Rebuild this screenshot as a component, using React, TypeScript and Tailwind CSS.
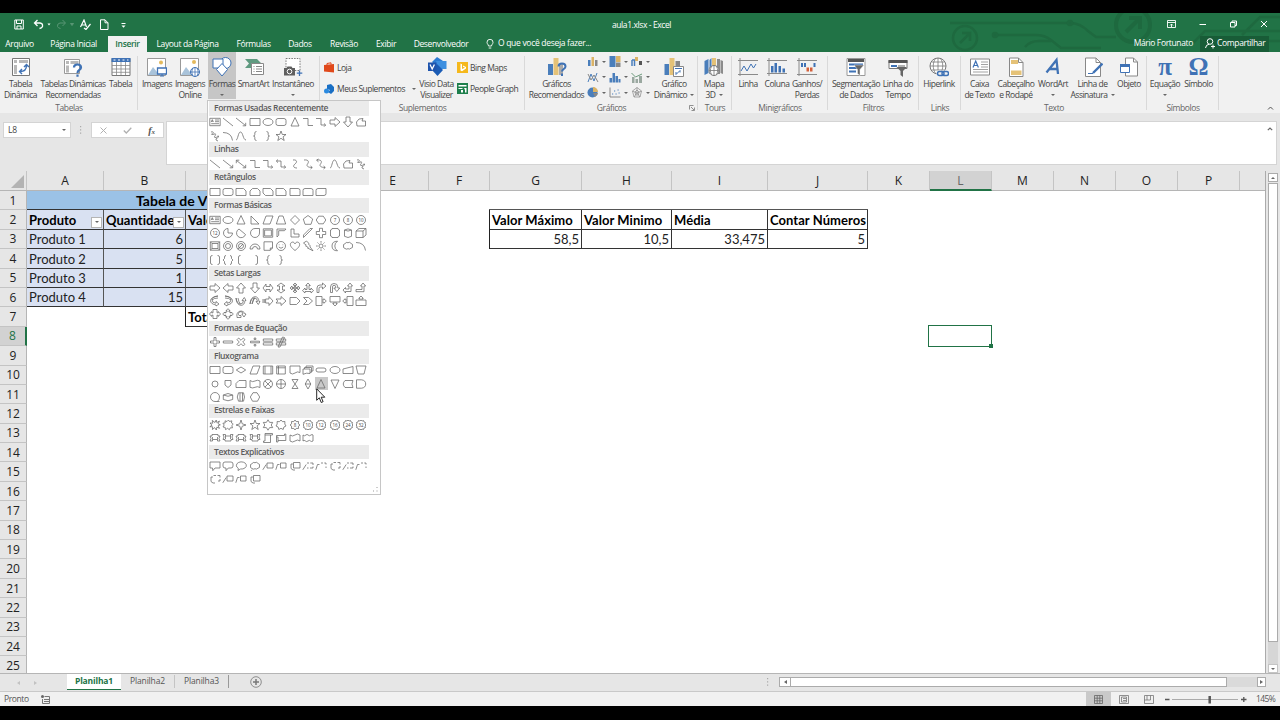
import type { ReactNode } from "react";

interface Shape {
  d: string;
  t?: string;
  active?: boolean;
}

interface ShapeSection {
  title: string;
  rows: (string | Shape)[][];
}

interface RibbonButtonProps {
  icon: ReactNode;
  lines: string[];
  width: string;
  arrow?: boolean;
  inlineArrow?: boolean;
  active?: boolean;
}

// Every shape is drawn on a 12x12 box
const line = "M1 2L11 10";
const lineArrow = "M1 2L10.5 9.5M10.7 6.8V9.8H7.7";
const lineDouble = "M1.5 2.5L10.5 9.5M10.7 6.8V9.8H7.7M1.3 5.2V2.2H4.3";
const elbow = "M1 2.5H6V9.5H11";
const elbowArrow = "M1 2.5H6V9H10.5M9 7.5L10.7 9L9 10.7";
const elbowDouble = "M1.5 3H6V9H10.5M9 7.5L10.7 9L9 10.7M3 1.5L1.3 3L3 4.7";
const curve = "M4 2C8 1.5 8.5 4 6 6C3.5 8 4.5 10 8 10";
const curveArrow = "M2 2C7 1.5 7 4 5.5 6C4 8 6 9.5 10 9.5M8.5 8L10.3 9.5L8.5 11";
const curveDouble = curveArrow + "M3.5 1L1.5 2.2L3.5 3.8";
const wave = "M1 10C3 10 3 2 5.5 2S8 10 11 10";
const freeform = "M2 10L1.5 6L4 3L8 2.5L7 5H10.5V10Z";
const scribble = "M2 2C5 1 5 4 3 4C1 4.5 6 5 6 3.5C8 5 4 7 6 7.5C9 8 8 5 9.5 6C10.5 8 6 8 7 10L9 11";
const rect = "M1 2.5H11V9.5H1Z";
const oval = "M1 6A5 3.5 0 1 0 11 6A5 3.5 0 1 0 1 6Z";
const circle = "M1.5 6A4.5 4.5 0 1 0 10.5 6A4.5 4.5 0 1 0 1.5 6Z";
const roundRect = "M3 2.5H9Q11 2.5 11 4.5V7.5Q11 9.5 9 9.5H3Q1 9.5 1 7.5V4.5Q1 2.5 3 2.5Z";
const snipOne = "M1 2.5H8.5L11 5V9.5H1Z";
const snipTwo = "M3.5 2.5H8.5L11 5V9.5H1V5Z";
const snipDiag = "M1 2.5H8.5L11 5V9.5H3.5L1 7Z";
const roundOne = "M1 2.5H9Q11 2.5 11 4.5V9.5H1Z";
const roundTwo = "M3 2.5H9Q11 2.5 11 4.5V9.5H1V4.5Q1 2.5 3 2.5Z";
const roundDiag = "M3 2.5H11V7.5Q11 9.5 9 9.5H1V4.5Q1 2.5 3 2.5Z";
const textBox = "M.8 2.3H11.2V9.7H.8ZM2.2 6L3.3 3.6L4.4 6M2.6 5.2H4M6 4H10M6 5.7H10M2.2 7.7H10";
const triangle = "M6 1.5L10 10H2Z";
const rightTriangle = "M2 2V10H10Z";
const parallelogram = "M4 2H11L8 10H1Z";
const trapezoid = "M4 2H8L10.7 10H1.3Z";
const diamond = "M6 1.5L10.5 6L6 10.5L1.5 6Z";
const pentagon = "M6 1.5L10.7 5L9 10.3H3L1.3 5Z";
const hexagon = "M3.7 2.2H8.3L10.8 6L8.3 9.8H3.7L1.2 6Z";
const arrowRight = "M1 4H6V1.5L11 6L6 10.5V8H1Z";
const arrowLeft = "M11 4H6V1.5L1 6L6 10.5V8H11Z";
const arrowUp = "M4 11V6H1.5L6 1L10.5 6H8V11Z";
const arrowDown = "M4 1V6H1.5L6 11L10.5 6H8V1Z";
const arrowH = "M1 6L4 2V4.5H8V2L11 6L8 10V7.5H4V10Z";
const arrowV = "M6 1L10 4H7.5V8H10L6 11L2 8H4.5V4H2Z";
const quadArrow = "M6 1L8 3H6.5V5.5H9V4L11 6L9 8V6.5H6.5V9H8L6 11L4 9H5.5V6.5H3V8L1 6L3 4V5.5H5.5V3H4Z";
const triArrow = "M6 1L8.3 3.5H7V7.5H9V6L11.5 8.7L9 11V9.5H3V11L.5 8.7L3 6V7.5H5V3.5H3.7Z";
const bentArrow = "M2 10.5V6Q2 3 5 3H7.5V1L11 4L7.5 7V5H5.5Q4 5 4 6.5V10.5Z";
const uTurn = "M1.5 10.5V5Q1.5 1.5 5 1.5Q8.8 1.5 8.8 5V6H10.8L7.8 9.5L4.8 6H6.8V5Q6.8 3.3 5 3.3Q3.5 3.3 3.5 5V10.5Z";
const leftUp = "M1 8L3.5 5.5V7H7V4H5.5L8 1L10.5 4H9V9.5H3.5V11Z";
const bentUp = "M1 7.5H7V4H5.5L8 1L10.7 4H9V9.7H1Z";
const curvedRight = "M9 1Q3 1.5 3 5Q3 8 7 8.2V6.5L10 9L7 11V10Q1.5 9 1.5 5.5Q2 2 9 1ZM3 5Q5 3 9 3";
const curvedLeft = "M3 1Q9 1.5 9 5Q9 8 5 8.2V6.5L2 9L5 11V10Q10.5 9 10.5 5.5Q10 2 3 1ZM9 5Q7 3 3 3";
const curvedUp = "M1 3Q2 9 5.5 9Q8.3 9 8.5 5.5H7L9.3 2.5L11 5.5H10Q9.5 10.3 6 10.3Q1.5 10 1 3ZM5.5 9Q3.5 7 3 3";
const curvedDown = "M1 9Q2 3 5.5 3Q8.3 3 8.5 6.5H7L9.3 9.5L11 6.5H10Q9.5 1.7 6 1.7Q1.5 2 1 9ZM5.5 3Q3.5 5 3 9Z";
const stripedArrow = "M1 4V8M2.3 4V8M3.6 4H7V1.5L11 6L7 10.5V8H3.6Z";
const notchedArrow = "M1 4H6V1.5L11 6L6 10.5V8H1L2.8 6Z";
const homePlate = "M1 2.5H7.5L11 6L7.5 9.5H1Z";
const chevron = "M1.5 2.5H6.5L10.5 6L6.5 9.5H1.5L5 6Z";
const calloutRight = "M1 1.5H7V10.5H1ZM7 5H8.8V3.7L11.3 6L8.8 8.3V7H7";
const calloutDown = "M1 1.5H11V7H1ZM5 7V8.6H3.7L6 11L8.3 8.6H7V7";
const calloutLeft = "M5 1.5H11V10.5H5ZM5 5H3.2V3.7L.7 6L3.2 8.3V7H5";
const calloutUp = "M1 5H11V10.5H1ZM5 5V3.4H3.7L6 1L8.3 3.4H7V5";
const calloutH = "M4 1.5H8V4.8H9.3V3.5L11.5 6L9.3 8.5V7.2H8V10.5H4V7.2H2.7V8.5L.5 6L2.7 3.5V4.8H4Z";
const calloutQuad = "M6 .7L8 2.7H7V4H8.5V5H9.3V4L11.3 6L9.3 8V7H8.5V8.3H7V9.3H8L6 11.3L4 9.3H5V8.3H3.5V7H2.7V8L.7 6L2.7 4V5H3.5V4H5V2.7H4Z";
const star4 = "M6 1L7.2 4.8L11 6L7.2 7.2L6 11L4.8 7.2L1 6L4.8 4.8Z";
const star5 = "M6 1L7.3 4.5H11L8.1 6.8L9.2 10.5L6 8.3L2.8 10.5L3.9 6.8L1 4.5H4.7Z";
const star6 = "M6 .8L7.6 3.4H10.7L9.2 6L10.7 8.6H7.6L6 11.2L4.4 8.6H1.3L2.8 6L1.3 3.4H4.4Z";
const star7 = "M6 1L7.5 2.7L9.9 2.5L9.8 5L11 7L8.9 8L8.2 10.5L6 9.3L3.8 10.5L3.1 8L1 7L2.2 5L2.1 2.5L4.5 2.7Z";
const star8 = "M6 1L7.2 2.6L9.5 2.5L9.4 4.8L11 6L9.4 7.2L9.5 9.5L7.2 9.4L6 11L4.8 9.4L2.5 9.5L2.6 7.2L1 6L2.6 4.8L2.5 2.5L4.8 2.6Z";
const burst = "M6 3.5L7.2 1L7.8 3.6L10.5 2L9 4.8L11.3 5.8L9 6.8L10.5 9.3L7.8 8.2L7.3 11L5.7 8.6L3.4 10.5L3.7 7.8L.8 7.7L3 6.2L1 4L3.8 4.2L3.2 1.4Z";
const burstRound = "M5 2.5L6.5 1L7.5 2.5L9.8 1.8L9.5 4L11.2 5.2L9.8 6.5L10.5 8.8L8.3 8.8L7.3 10.8L5.7 9.3L3.5 10.6L3.2 8.4L1 8L2.2 6L.9 4.2L3.2 4L3 1.8Z";
const gear = "M6 1L7 2L8.5 1.5L9 3L10.5 3.5L10 5L11 6L10 7L10.5 8.5L9 9L8.5 10.5L7 10L6 11L5 10L3.5 10.5L3 9L1.5 8.5L2 7L1 6L2 5L1.5 3.5L3 3L3.5 1.5L5 2Z";
const plus = "M4.5 1.3H7.5V4.5H10.7V7.5H7.5V10.7H4.5V7.5H1.3V4.5H4.5Z";
const mathPlus = "M5 1.5H7V5H10.5V7H7V10.5H5V7H1.5V5H5Z";
const minus = "M1.3 5H10.7V7H1.3Z";
const times = "M2 3.7L3.7 2L6 4.3L8.3 2L10 3.7L7.7 6L10 8.3L8.3 10L6 7.7L3.7 10L2 8.3L4.3 6Z";
const divide = "M1.5 5.2H10.5V6.8H1.5ZM5.2 2H6.8V3.5H5.2ZM5.2 8.5H6.8V10H5.2Z";
const equal = "M1.3 3H10.7V5.2H1.3ZM1.3 6.8H10.7V9H1.3Z";
const notEqual = equal + "M3 11L7.5 1L9.5 1.5L5 11Z";
const ribbonUp = "M1 4H3V2.5H9V4H11L10 6.5L11 9H8.5V7.5H3.5V9H1L2 6.5ZM3.5 7.5V5M8.5 7.5V5";
const ribbonDown = "M1 2.5H3.5V4H8.5V2.5H11L10 5L11 7.5H9V9H3V7.5H1L2 5ZM3.5 4V7M8.5 4V7";
const scrollV = "M3 1.5H10.5V3H8.5V10.5H1.5V9H3ZM3 3H8.5";
const scrollH = "M1.5 3.5H9.5V2H10.8V8.5H3V10H1.5ZM3 8.5V5H1.5";
const waveBox = "M1 3Q3.5 5 6 3T11 3V9Q8.5 7 6 9T1 9Z";
const doubleWave = "M1 3Q2.5 4.5 4 3Q5 1.7 6 3Q7.5 4.5 9 3Q10 2 11 3V9Q9.5 10 8.5 9Q7.5 7.7 6 9Q4.5 10.2 3.5 9Q2 7.7 1 9Z";
const calloutRect = "M1 2H11V8H6L3.8 10.7L3.5 8H1Z";
const calloutRound = "M3 2H9Q11 2 11 4V6Q11 8 9 8H6.3L4 10.7V8H3Q1 8 1 6V4Q1 2 3 2Z";
const calloutOval = "M3 10.5L3.3 8.3A5 3.6 0 1 1 5.5 9Z";
const cloud = "M3 8.5Q1 8 1.5 6Q1 4 3 3.7Q4 1.8 6 2.7Q8 1.5 9 3.5Q11.3 4 10.5 6Q11 8 9 8.2Q7.5 9.7 6 8.7Q4.5 9.7 3 8.5Z";
const cloudCallout = cloud + "M3 9.7L2.2 10.8";
const note1 = "M5 3H11V8H5ZM.8 9.8L4.2 4.5";
const note2 = "M5.5 3H11V8H5.5ZM.8 9.8L2.5 4.5H4.5";
const note3 = "M4.5 2.5H11V8H4.5ZM4 4H2V8.5L4 10H6";
const noteOpen1 = "M5 3H7M8.3 3H11V5M11 6.5V8H8M6.5 8H5M.8 9.8L4.2 4.5";
const noteOpen2 = "M6 3H8M9.3 3H11V4.5M11 6.5V8M.8 9.8L2.5 4.5H4.5";
const noteOpen3 = "M4.5 2.5H7M8.5 2.5H11V4.5M11 6V8H9M4 4H2V8.5L4 10H6";
const can = "M2.5 3V9.3Q6 11.7 9.5 9.3V3Q6 .8 2.5 3Q6 5.2 9.5 3";
const cube = "M1 4L4 1.5H11V8L8 10.5H1ZM1 4H8V10.5M8 4L11 1.5";
const bevel = "M1.3 1.8H10.7V10.2H1.3ZM3 3.5H9V8.5H3ZM1.3 1.8L3 3.5M10.7 1.8L9 3.5M10.7 10.2L9 8.5M1.3 10.2L3 8.5";
const frame = "M1.3 1.8H10.7V10.2H1.3ZM2.6 3.1H9.4V8.9H2.6Z";
const bracketL = "M5.5 1.5Q3.5 1.5 3.5 3V9Q3.5 10.5 5.5 10.5";
const bracketR = "M6.5 1.5Q8.5 1.5 8.5 3V9Q8.5 10.5 6.5 10.5";
const braceL = "M7.5 1.5Q5.8 1.5 5.8 3V4.7Q5.8 6 4.5 6Q5.8 6 5.8 7.3V9Q5.8 10.5 7.5 10.5";
const braceR = "M4.5 1.5Q6.2 1.5 6.2 3V4.7Q6.2 6 7.5 6Q6.2 6 6.2 7.3V9Q6.2 10.5 4.5 10.5";
const bracketPair = "M3.5 1.5Q1.5 1.5 1.5 3V9Q1.5 10.5 3.5 10.5M8.5 1.5Q10.5 1.5 10.5 3V9Q10.5 10.5 8.5 10.5";
const bracePair = "M4 1.5Q2.5 1.5 2.5 3V4.5L1 6L2.5 7.5V9Q2.5 10.5 4 10.5M8 1.5Q9.5 1.5 9.5 3V4.5L11 6L9.5 7.5V9Q9.5 10.5 8 10.5";
const arc = "M1 2.5Q9.5 2.5 10.5 10.5";

const sections: ShapeSection[] = [
  {
    title: "Formas Usadas Recentemente",
    rows: [
      [textBox, line, lineArrow, rect, oval, roundRect, triangle, elbow, elbowArrow, arrowRight, arrowDown, freeform],
      [scribble, arc, wave, braceL, braceR, star5],
    ],
  },
  {
    title: "Linhas",
    rows: [
      [line, lineArrow, lineDouble, elbow, elbowArrow, elbowDouble, curve, curveArrow, curveDouble, wave, freeform, scribble],
    ],
  },
  {
    title: "Retângulos",
    rows: [[rect, roundRect, snipOne, snipTwo, snipDiag, snipOne, roundOne, roundTwo, roundDiag]],
  },
  {
    title: "Formas Básicas",
    rows: [
      [
        textBox, oval, triangle, rightTriangle, parallelogram, trapezoid, diamond, pentagon, hexagon,
        { d: circle, t: "7" }, { d: circle, t: "8" }, { d: circle, t: "10" },
      ],
      [
        { d: circle, t: "12" },
        "M6 1.5A4.5 4.5 0 1 0 10.5 6H6Z",
        "M4 2A4.6 4.6 0 1 0 10.5 7.5Z",
        "M6 1.5H10.5V6A4.5 4.5 0 1 1 6 1.5Z",
        frame,
        "M2 10V2H11L9.5 3.7H3.7V8.3Z",
        "M2 2H5V7H10V10H2Z",
        "M1.5 8L8 1.5H10.5L1.5 10.5Z",
        plus,
        "M3 1.5H9Q9 3 10.5 3V9Q9 9 9 10.5H3Q3 9 1.5 9V3Q3 3 3 1.5Z",
        can,
        cube,
      ],
      [
        bevel,
        circle + "M3.5 6A2.5 2.5 0 1 0 8.5 6A2.5 2.5 0 1 0 3.5 6Z",
        circle + "M3.5 6A2.5 2.5 0 1 0 8.5 6A2.5 2.5 0 1 0 3.5 6ZM4 8L8 4M2.8 9.2L4.3 7.7",
        "M1 9A5 5 0 0 1 11 9H8.5A2.5 2.5 0 0 0 3.5 9Z",
        "M2 1.8H10.5V8L8.3 10.3H2ZM8.3 10.3V8H10.5",
        circle + "M3.8 7Q6 9.5 8.2 7M4.2 4.5V5.2M7.8 4.5V5.2",
        "M6 10.5C2 7.5 1 5.5 1.5 3.7C2.2 1.5 5.2 1.5 6 4C6.8 1.5 9.8 1.5 10.5 3.7C11 5.5 10 7.5 6 10.5Z",
        "M4.5 1L7 3.5L6.3 4L8.5 6L7.8 6.5L11 10.8L5.5 8L6.3 7.5L3.5 5.8L4.3 5.2L1.5 3Z",
        "M4 6A2 2 0 1 0 8 6A2 2 0 1 0 4 6ZM6 1V2.7M6 9.3V11M1 6H2.7M9.3 6H11M2.5 2.5L3.6 3.6M8.4 8.4L9.5 9.5M2.5 9.5L3.6 8.4M8.4 3.6L9.5 2.5",
        "M8.5 1.2Q3 1.2 3 6T8.5 10.8Q5.8 9 5.8 6T8.5 1.2Z",
        cloud,
        arc,
      ],
      [bracketPair, bracePair, bracketL, bracketR, braceL, braceR],
    ],
  },
  {
    title: "Setas Largas",
    rows: [
      [arrowRight, arrowLeft, arrowUp, arrowDown, arrowH, arrowV, quadArrow, triArrow, bentArrow, uTurn, leftUp, bentUp],
      [curvedRight, curvedLeft, curvedUp, curvedDown, stripedArrow, notchedArrow, homePlate, chevron, calloutRight, calloutDown, calloutLeft, calloutUp],
      [calloutH, calloutQuad, "M2 8.5A4 4 0 1 1 10 6H11L9 9L6.8 6H8A2.3 2.3 0 1 0 4 7.5H6V9.5H2Z"],
    ],
  },
  {
    title: "Formas de Equação",
    rows: [[mathPlus, minus, times, divide, equal, notEqual]],
  },
  {
    title: "Fluxograma",
    rows: [
      [
        rect,
        roundRect,
        "M6 3L10.7 6L6 9L1.3 6Z",
        parallelogram,
        "M1.3 2H10.7V10H1.3ZM3 2V10M9 2V10",
        "M1.7 2H10.3V10H1.7ZM3.5 2V10M1.7 3.8H10.3",
        "M1 2H11V8.5Q8.5 7 6 9T1 9Z",
        "M1 5H8V9.5Q4.5 8.5 1 10.3ZM2.5 5V3.5H9.5V8.3H8M4 3.5V2H11V7H9.5",
        "M3 4H9Q11 4 11 6T9 8H3Q1 8 1 6T3 4Z",
        oval,
        "M1 5L11 2.5V9.5H1Z",
        "M1 2H11L9 10H3Z",
      ],
      [
        "M3 6A3 3 0 1 0 9 6A3 3 0 1 0 3 6Z",
        "M3 2.5H9V7L6 9.5L3 7Z",
        "M4 2.5H11V9.5H1V5.5Z",
        "M1 2.5Q3.5 4.5 6 3T11 3V9.5Q8.5 8 6 9.3T1 9.3Z",
        circle + "M2.8 2.8L9.2 9.2M9.2 2.8L2.8 9.2",
        circle + "M6 1.5V10.5M1.5 6H10.5",
        "M3 1.5H9L3 10.5H9Z",
        "M6 1L8.8 6L6 11L3.2 6ZM3.2 6H8.8",
        { d: triangle, active: true },
        "M2 2H10L6 10.5Z",
        "M3 2.5H11Q8.8 6 11 9.5H3Q-.5 6 3 2.5Z",
        "M1.5 1.8H6.5Q10.7 2.3 10.7 6T6.5 10.2H1.5Z",
      ],
      [
        "M10.5 10.5H6A4.5 4.5 0 1 1 10.5 6Q10.5 8.5 8.5 10.5",
        "M1.3 4V8.5Q6 11 10.7 8.5V4Q6 1 1.3 4Q6 6.5 10.7 4",
        "M3.5 1.8H8.5Q10.5 6 8.5 10.2H3.5Q1 6 3.5 1.8ZM5 1.8V10.2M7.5 1.8V10.2",
        "M4 1.7H8L10.7 6L8.5 10.2H3.5L1.3 6Z",
      ],
    ],
  },
  {
    title: "Estrelas e Faixas",
    rows: [
      [
        burst, burstRound, star4, star5, star6, star7,
        { d: star8, t: "8" }, { d: gear, t: "10" }, { d: gear, t: "12" }, { d: gear, t: "16" }, { d: gear, t: "24" }, { d: gear, t: "32" },
      ],
      [ribbonUp, ribbonDown, ribbonUp, ribbonDown, scrollV, scrollH, waveBox, doubleWave],
    ],
  },
  {
    title: "Textos Explicativos",
    rows: [
      [calloutRect, calloutRound, calloutOval, cloudCallout, note1, note2, note3, noteOpen1, noteOpen2, noteOpen3, noteOpen1, noteOpen2],
      [noteOpen3, note1, note2, note3],
    ],
  },
];

const BLUE = "#3f72b5";
const GRAY = "#777";

function Icon({ children }: { children: ReactNode }) {
  return (
    <svg className="h-5 w-5 shrink-0" viewBox="0 0 20 20" fill="none">
      {children}
    </svg>
  );
}

const icons = {
  pivot: (
    <Icon>
      <path d="M1.5 1.5h17v17h-17z" fill="#fff" stroke={GRAY} />
      <path d="M3 3h3v3H3zM8 3h9v3H8zM3 8h3v9H3z" fill="#b9b9b9" />
      <path d="M9 14.5c4 0 6.5-1.5 6.5-6M13 10l2.5-2.5L18 10M11 12l-2.5 2.5L11 17" stroke={BLUE} strokeWidth="1.4" />
    </Icon>
  ),
  pivotHelp: (
    <Icon>
      <path d="M1.500 2.500h15v14h-15z" fill="#fff" stroke="#999" />
      <path d="M3 4h3v3H3zM7.500 4h8v3h-8zM3 8.500h3v7H3z" fill="#b9b9b9" />
      <path d="M11 10.500c0-4 7-4 7 0 0 2.500-3.500 2.500-3.500 5.500M14.500 17.500v2.300" stroke={BLUE} strokeWidth="2.200" />
    </Icon>
  ),
  table: (
    <Icon>
      <path d="M1 1.500h18v17H1z" fill="#fff" stroke={GRAY} />
      <path d="M.5 1h19v4H.5z" fill={BLUE} />
      <path d="M2.500 3h2M7 3h2M11.500 3h2M16 3h1.500" stroke="#fff" />
      <path d="M5.500 5v13M10 5v13M14.500 5v13M1 8.500h18M1 12h18M1 15.300h18" stroke="#888" strokeWidth=".8" />
    </Icon>
  ),
  picture: (
    <Icon>
      <path d="M.5 1.500h18v17H.5z" fill="#fff" stroke="#999" />
      <path d="M1 18l5-8 4 5 3-3v6z" fill="#a9c3da" />
      <circle cx="14" cy="5.500" r="2" fill="#e3b95c" />
      <path d="M10.500 11h9v6h-9z" fill="#fff" stroke={BLUE} strokeWidth="1.300" />
      <path d="M13 19h4M15 17v2" stroke={BLUE} />
    </Icon>
  ),
  pictureWeb: (
    <Icon>
      <path d="M.5 1.500h18v17H.5z" fill="#fff" stroke="#999" />
      <path d="M1 18l5-8 4 5 3-3v6z" fill="#a9c3da" />
      <circle cx="14" cy="5" r="2" fill="#e3b95c" />
      <circle cx="15" cy="15" r="4.500" fill="#fff" stroke={BLUE} />
      <path d="M10.500 15h9M15 10.500v9M13 11c-1.500 3-1.500 5 0 8M17 11c1.500 3 1.500 5 0 8" stroke={BLUE} strokeWidth=".8" />
    </Icon>
  ),
  shapes: (
    <Icon>
      <circle cx="13.500" cy="6" r="5.500" fill="#fff" stroke={BLUE} />
      <path d="M1 2h10v9H1z" fill="#fff" stroke={BLUE} />
      <path d="M10 6.500l5.500 6L10 19l-5.500-6.500z" fill="#fff" stroke={BLUE} />
    </Icon>
  ),
  smartArt: (
    <Icon>
      <path d="M1 2h12l5 5-3 4H1l4-4.500z" fill="#5f9a80" />
      <path d="M7.500 6.500h12v11h-12z" fill="#fff" stroke="#888" />
      <path d="M9.500 9.500h1M12 9.500h6M9.500 12h1M12 12h6M9.500 14.500h1M12 14.500h6" stroke="#888" />
    </Icon>
  ),
  screenshot: (
    <Icon>
      <path d="M3 1.500h14v12H3z" fill="#fff" stroke="#777" strokeDasharray="1.500 1.200" />
      <path d="M1 11h2.500l1-1.500h4l1 1.500H12v7.500H1z" fill="#5f5f5f" />
      <circle cx="6.500" cy="14.500" r="2.300" fill="#5f5f5f" stroke="#fff" />
      <path d="M16.500 13.500v5.500M13.800 16.200h5.500" stroke={BLUE} strokeWidth="1.300" />
    </Icon>
  ),
  visio: (
    <Icon>
      <path d="M10 0l6 4-6 6-5-5z" fill="#2b7cd3" />
      <path d="M9 4h10.500v8H11z" fill="#3d8fe0" />
      <path d="M10 7l6 6-5.500 6L5 13z" fill="#1b5cb5" />
      <path d="M1 5.500h8.500V14H1z" fill="#1e54ad" />
      <path d="M3 7.500l2.200 4.500 2.200-4.500" stroke="#fff" strokeWidth="1.300" />
    </Icon>
  ),
  chartHelp: (
    <Icon>
      <path d="M1 7h5v11H1z" fill="#4a7ebb" />
      <path d="M6.500 1h5v17h-5z" fill="#e5c277" />
      <path d="M12 7h4v11h-4z" fill="#aaa" />
      <path d="M11.500 9.500c0-4 7-4 7 0 0 2.500-3.500 2.500-3.500 5M15 16.500v2.500" stroke={BLUE} strokeWidth="2" />
    </Icon>
  ),
  pivotChart: (
    <Icon>
      <path d="M.5 7h4.500v11H.5z" fill="#4a7ebb" />
      <path d="M5.500 1h5v17h-5z" fill="#e5c277" />
      <path d="M11.500 4h4.500v8h-4.500z" fill="#888" />
      <path d="M9.500 9.500h10v10h-10z" fill="#fff" stroke="#888" />
      <path d="M11 11.500h7M12 17.500l4-4M16 13.500v2M12 17.500v-2.500" stroke={BLUE} />
    </Icon>
  ),
  map3d: (
    <Icon>
      <path d="M.5 4l4-2v14l-4 2z" fill="#4a7ebb" />
      <path d="M5.500 3l2-2v16h-2z" fill="#4a7ebb" />
      <path d="M8 1h4v10H8z" fill="#e5c277" />
      <path d="M13 2h3v15h-3zM16.500 3l2.500 1v13l-2.500-1z" fill="#8b8b8b" />
      <circle cx="10" cy="13.500" r="5" fill="#fff" stroke="#777" />
      <path d="M5 13.500h10M10 8.500v10M7.500 9.500c-1.500 3-1.500 5 0 8M12.500 9.500c1.500 3 1.500 5 0 8" stroke="#777" strokeWidth=".8" />
    </Icon>
  ),
  sparkLine: (
    <Icon>
      <path d="M0 3.500h20M0 17.500h20M2 1v18" stroke="#8a8a8a" />
      <path d="M3 14l3-5 3 5 4-7 2.500 4L18 7" stroke={BLUE} />
    </Icon>
  ),
  sparkColumn: (
    <Icon>
      <path d="M0 3.500h20M0 16.500h20M2 1v18" stroke="#8a8a8a" />
      <path d="M4 9h2.500v6.500H4zM7.500 6H10v9.500H7.500zM11.500 9H14v6.500h-2.500zM15.500 11.500H18v4h-2.500z" fill={BLUE} />
    </Icon>
  ),
  sparkWin: (
    <Icon>
      <path d="M0 3.500h20M0 17.500h20M2 1v18" stroke="#8a8a8a" />
      <path d="M4 6h2v4H4zM7 6h2v4H7zM16.500 6h2v4h-2z" fill={BLUE} />
      <path d="M9.500 10.500H12v4H9.500zM13 10.500h2.500v4H13z" fill="#d4603a" />
    </Icon>
  ),
  slicer: (
    <Icon>
      <path d="M1 1.500h18v17H1z" fill="#fff" stroke="#999" />
      <path d="M2 2h16v3H2z" fill="#555" />
      <path d="M3 7.500h14M3 11h9M3 14.500h7" stroke={BLUE} strokeWidth="1.800" />
      <path d="M8 8h10l-4 4.500v6l-2.500-2v-4z" fill="#666" stroke="#eee" strokeWidth=".5" />
    </Icon>
  ),
  timeline: (
    <Icon>
      <path d="M1 3.500h18v8H1z" fill="#fff" stroke="#777" />
      <path d="M.5 3h19v3H.5z" fill="#555" />
      <path d="M3 9h6" stroke={BLUE} strokeWidth="2" />
      <path d="M10 9h7" stroke="#999" strokeWidth="1.500" />
      <path d="M8.500 10H19l-4 4v6l-2.500-2v-4z" fill="#666" />
    </Icon>
  ),
  link: (
    <Icon>
      <circle cx="9" cy="9" r="8" fill="#fff" stroke="#777" />
      <path d="M1 9h16M9 1v16M2.500 5h13M2.500 13h13M6.500 1.500c-3 4.500-3 10 0 15M11.500 1.500c3 4.500 3 10 0 15" stroke="#777" strokeWidth=".8" />
      <path d="M7.500 13.500h12.500v6H7.500z" fill="#f1f1f1" />
      <rect x="8.500" y="14.500" width="6.500" height="4" rx="2" stroke={BLUE} strokeWidth="1.500" />
      <rect x="13" y="14.500" width="6.500" height="4" rx="2" stroke={BLUE} strokeWidth="1.500" />
    </Icon>
  ),
  textBox: (
    <Icon>
      <path d="M.5 2h19v16H.5z" fill="#fff" stroke="#888" />
      <path d="M3 10.500L5.700 4l2.700 6.500M4 8.500h3.500" stroke={BLUE} strokeWidth="1.200" />
      <path d="M11 5h7M11 7.500h7M11 10h7M3 12.500h15M3 15h15" stroke="#999" strokeWidth=".9" />
    </Icon>
  ),
  headerFooter: (
    <Icon>
      <path d="M3.500 1h9l4.500 4.500v14H3.500z" fill="#fff" stroke="#888" />
      <path d="M5 3h7v4H5zM5 13.500h10.500V18H5z" fill="#e5c277" />
      <path d="M12.500 1v4.500H17" stroke="#888" />
    </Icon>
  ),
  wordArt: (
    <Icon>
      <path d="M3.500 15.500L13.500 3l1.500 14M6.500 12h8" stroke={BLUE} strokeWidth="2.300" />
    </Icon>
  ),
  signature: (
    <Icon>
      <path d="M2.500 1H13l4.500 4.500v14h-15z" fill="#fff" stroke="#888" />
      <path d="M13 1v4.500h4.500" stroke="#888" />
      <path d="M5 16.500h5" stroke={BLUE} />
      <path d="M10 16L19.500 6.500" stroke={BLUE} strokeWidth="2.400" />
    </Icon>
  ),
  object: (
    <Icon>
      <path d="M6.500 1h8l4 4v14h-12z" fill="#fff" stroke="#888" />
      <path d="M14.500 1v4h4" stroke="#888" />
      <path d="M1.500 7.500h9v8h-9z" fill="#fff" stroke={BLUE} />
      <path d="M1 7h10v3H1z" fill={BLUE} />
    </Icon>
  ),
};

function Glyph({ children }: { children: ReactNode }) {
  return (
    <span className="flex h-5 items-center justify-center font-['Liberation_Serif'] text-[25px] font-bold leading-5 tracking-normal text-[#3f72b5]">
      {children}
    </span>
  );
}

function Caret() {
  return <span className="inline-block h-0 w-0 border-x-2 border-t-2 border-x-transparent border-t-[#666]" />;
}

function RibbonButton({ icon, lines, width, arrow, inlineArrow, active }: RibbonButtonProps) {
  return (
    <div
      className={`${width} flex h-[47px] shrink-0 flex-col items-center pt-[5px] ${active ? "bg-[#c6c6c6]" : ""}`}
    >
      {icon}
      <div className="mt-[2px] text-center leading-[10.5px] whitespace-nowrap">
        {lines.map((text, i) => (
          <div key={text} className="flex items-center justify-center">
            {text}
            {inlineArrow && i === lines.length - 1 && (
              <span className="ml-[3px] flex">
                <Caret />
              </span>
            )}
          </div>
        ))}
      </div>
      {arrow && (
        <span className="mt-[4px] flex">
          <Caret />
        </span>
      )}
    </div>
  );
}

function Group({ label, width, children, launcher }: { label?: string; width: string; children: ReactNode; launcher?: boolean }) {
  return (
    <div className={`${width} relative flex shrink-0 flex-col justify-between`}>
      <div className="flex">{children}</div>
      {label && <div className="text-center text-[8.5px] leading-[10px] tracking-[-0.4px] text-[#666]">{label}</div>}
      <span className="absolute top-[4px] right-0 h-[54px] w-px bg-[#d9d9d9]" />
      {launcher && (
        <svg className="absolute right-[3px] bottom-[2px] h-[6px] w-[6px]" viewBox="0 0 6 6" fill="none" stroke="#777" strokeWidth=".8">
          <path d="M.5 4.500v-4h4M2 2l3 3M5.500 2.500v3h-3" />
        </svg>
      )}
    </div>
  );
}

function MiniChart({ kind }: { kind: string }) {
  return (
    <div className="flex h-[15.5px] w-[22px] items-center gap-[3px]">
      <svg className="h-[11px] w-[12px]" viewBox="0 0 12 11" fill="none">
        {kind === "column" && (
          <>
            <path d="M1 4h2.500v6H1z" fill="#4a7ebb" />
            <path d="M4.500 1H7v9H4.500z" fill="#dbb366" />
            <path d="M8 4h2.500v6H8z" fill="#888" />
          </>
        )}
        {kind === "tree" && (
          <>
            <path d="M.5 0h6v11h-6z" fill="#4a7ebb" />
            <path d="M7 0h4.500v6H7z" fill="#dbb366" />
            <path d="M7 6.500h4.500V11H7z" fill="#888" />
          </>
        )}
        {kind === "waterfall" && (
          <>
            <path d="M1 4h2.500v6M1 10V4" stroke="#4a7ebb" strokeWidth="1.500" />
            <path d="M4 1h3v4H4z" fill="#dbb366" />
            <path d="M8 5h3v4H8z" fill="#555" />
          </>
        )}
        {kind === "line" && (
          <>
            <path d="M1 10l3-8 3 7 3-8" stroke="#4a7ebb" />
            <path d="M1 2l3 6 3-5 4 7" stroke="#888" />
          </>
        )}
        {kind === "hist" && <path d="M.5 6H3v4.500H.5zM3.500 1H6v9.500H3.500zM6.500 4H9v6.500H6.500zM9.500 7h2v3.500h-2z" fill="#4a7ebb" />}
        {kind === "combo" && (
          <>
            <path d="M1 5h2.500v6H1zM4.500 7H7v4H4.500zM8 4h3v7H8z" fill="#9aa8a0" />
            <path d="M.5 1l4 4 6.500-3" stroke="#6c9a7c" />
          </>
        )}
        {kind === "pie" && (
          <>
            <circle cx="5.500" cy="5.500" r="5" fill="#4a7ebb" />
            <path d="M6 5V0a5 5 0 0 1 5 5z" fill="#dbb366" />
            <path d="M6 6h5a5 5 0 0 1-3 4z" fill="#888" />
          </>
        )}
        {kind === "scatter" && (
          <>
            <path d="M1 .5V10h10.500" stroke="#888" />
            <path d="M3 7h1.200M5 4h1.200M6.500 7h1.200M8.500 3h1.200M9.500 6h1.200" stroke="#4a7ebb" strokeWidth="1.200" />
          </>
        )}
        {kind === "radar" && (
          <path d="M6 .5l4.500 3.500L9 10H3L1.500 4zM6 3l2 2-.7 3H4.700L4 5zM6 .5V6M1.500 4L6 6l4.500-2M3 10l3-4 3 4" stroke="#888" strokeWidth=".7" />
        )}
      </svg>
      <Caret />
    </div>
  );
}

function Ribbon() {
  return (
    <div className="flex h-[61px] bg-[#f1f1f1] text-[8.5px] tracking-[-0.5px] text-[#444]">
      <Group label="Tabelas" width="w-[138px]">
        <RibbonButton icon={icons.pivot} lines={["Tabela", "Dinâmica"]} width="ml-[3px] w-[35px]" />
        <RibbonButton icon={icons.pivotHelp} lines={["Tabelas Dinâmicas", "Recomendadas"]} width="w-[70px]" />
        <RibbonButton icon={icons.table} lines={["Tabela"]} width="w-[25px]" />
      </Group>
      <Group width="w-[182px]">
        <RibbonButton icon={icons.picture} lines={["Imagens"]} width="ml-[3px] w-[32px]" />
        <RibbonButton icon={icons.pictureWeb} lines={["Imagens", "Online"]} width="w-[34px]" />
        <RibbonButton icon={icons.shapes} lines={["Formas"]} width="ml-px w-[28px]" arrow active />
        <RibbonButton icon={icons.smartArt} lines={["SmartArt"]} width="w-[35px]" />
        <RibbonButton icon={icons.screenshot} lines={["Instantâneo"]} width="w-[44px]" arrow />
      </Group>
      <Group label="Suplementos" width="w-[205px]">
        <div className="flex w-[98px] flex-col gap-[11px] pt-[10px] pl-[4px] leading-[10px]">
          <div className="flex items-center gap-[3px]">
            <svg className="h-[11px] w-[10px]" viewBox="0 0 10 11" fill="none">
              <path d="M0 3l10-1v8.500L0 9.500z" fill="#e0491b" />
              <path d="M3 3V1.500L7 .8V2.500" stroke="#e0491b" />
            </svg>
            Loja
          </div>
          <div className="flex items-center gap-[3px] whitespace-nowrap">
            <svg className="h-[10px] w-[10px]" viewBox="0 0 10 10">
              <path d="M3 1l4-1 3 3v4L7 10 4 8l2-2-3-1z" fill="#1a6fc4" />
              <circle cx="2.500" cy="7" r="2.500" fill="#2b8ae0" />
            </svg>
            Meus Suplementos
            <span className="ml-[4px] flex">
              <Caret />
            </span>
          </div>
        </div>
        <RibbonButton icon={icons.visio} lines={["Visio Data", "Visualizer"]} width="w-[37px]" />
        <div className="flex flex-col gap-[10px] pt-[10px] pl-[2px] leading-[11px]">
          <div className="flex items-center gap-[2px] whitespace-nowrap">
            <svg className="h-[11px] w-[11px]" viewBox="0 0 11 11">
              <path d="M0 0h11v11H0z" fill="#f5b81c" />
              <path d="M3.500 1.500L5 2.200V7l3-1.300-2-1V3.500l3 1.500v1.500L5 9.300 3.500 8.500z" fill="#fff" />
            </svg>
            Bing Maps
          </div>
          <div className="flex items-center gap-[2px] whitespace-nowrap">
            <svg className="h-[11px] w-[11px]" viewBox="0 0 11 11">
              <path d="M0 0h11v11H0z" fill="#1e7f4c" />
              <path d="M1.500 2h8v1.500h-8zM1.500 5h4v1h-4zM7 5h2.500v4.500H8V7zM4 7h2v2.500H4z" fill="#fff" />
            </svg>
            People Graph
          </div>
        </div>
      </Group>
      <Group label="Gráficos" width="w-[173px]" launcher>
        <RibbonButton icon={icons.chartHelp} lines={["Gráficos", "Recomendados"]} width="ml-px w-[61px]" />
        <div className="grid w-[66px] grid-cols-3 content-start pt-[2px]">
          {["column", "tree", "waterfall", "line", "hist", "combo", "pie", "scatter", "radar"].map((kind) => (
            <MiniChart key={kind} kind={kind} />
          ))}
        </div>
        <RibbonButton icon={icons.pivotChart} lines={["Gráfico", "Dinâmico"]} width="-ml-px w-[44px]" inlineArrow />
      </Group>
      <Group label="Tours" width="w-[34px]">
        <RibbonButton icon={icons.map3d} lines={["Mapa", "3D"]} width="ml-[2px] w-[28px]" inlineArrow />
      </Group>
      <Group label="Minigráficos" width="w-[96px]">
        <RibbonButton icon={icons.sparkLine} lines={["Linha"]} width="ml-[2px] w-[28px]" />
        <RibbonButton icon={icons.sparkColumn} lines={["Coluna"]} width="w-[30px]" />
        <RibbonButton icon={icons.sparkWin} lines={["Ganhos/", "Perdas"]} width="w-[30px]" />
      </Group>
      <Group label="Filtros" width="w-[91px]">
        <RibbonButton icon={icons.slicer} lines={["Segmentação", "de Dados"]} width="ml-[3px] w-[50px]" />
        <RibbonButton icon={icons.timeline} lines={["Linha do", "Tempo"]} width="w-[34px]" />
      </Group>
      <Group label="Links" width="w-[42px]">
        <RibbonButton icon={icons.link} lines={["Hiperlink"]} width="ml-[3px] w-[34px]" />
      </Group>
      <Group label="Texto" width="w-[186px]">
        <RibbonButton icon={icons.textBox} lines={["Caixa", "de Texto"]} width="ml-px w-[35px]" />
        <RibbonButton icon={icons.headerFooter} lines={["Cabeçalho", "e Rodapé"]} width="w-[38px]" />
        <RibbonButton icon={icons.wordArt} lines={["WordArt"]} width="w-[36px]" arrow />
        <RibbonButton icon={icons.signature} lines={["Linha de", "Assinatura"]} width="w-[43px]" inlineArrow />
        <RibbonButton icon={icons.object} lines={["Objeto"]} width="w-[30px]" />
      </Group>
      <Group label="Símbolos" width="w-[72px]">
        <RibbonButton icon={<Glyph>π</Glyph>} lines={["Equação"]} width="ml-[2px] w-[32px]" arrow />
        <RibbonButton icon={<Glyph>Ω</Glyph>} lines={["Símbolo"]} width="w-[35px]" />
      </Group>
      <div className="flex flex-1 items-end justify-end pr-[6px] pb-[3px]">
        <svg className="h-[4px] w-[7px]" viewBox="0 0 7 4" fill="none" stroke="#555">
          <path d="M1 3.500L3.500 1 6 3.500" />
        </svg>
      </div>
    </div>
  );
}

function TitleBar() {
  return (
    <div className="flex h-[22px] items-center text-[8.5px] text-white">
      <div className="flex flex-1 items-center pl-[14px]">
        <svg className="h-[11px] w-[112px]" viewBox="0 0 112 11" fill="none" stroke="#fff">
          <path d="M.8 1h8.500v9H.8zM2.500 1v3.500h5V1M3 10V7h4v3" />
          <path d="M23.500 1l-3 3 3 3M21 4h5q3 .5 2.500 3.500-.5 1.500-3 2" strokeWidth="1.300" />
          <path d="M33.500 4.500h3l-1.500 2z" fill="#fff" stroke="none" />
          <g opacity=".25">
            <path d="M48.500 1l3 3-3 3M51 4h-5q-3 .5-2.500 3.500.5 1.500 3 2" />
            <path d="M56.500 4.500h3l-1.500 2z" fill="#fff" />
          </g>
          <path d="M66.500 8L70 1l2.500 7M68 6h4M70 9l2 1.500L76.500 5" strokeWidth="1.200" />
          <path d="M86.500.8h4.500l3 3v6.700h-7.500zM91 .8v3h3" />
          <path d="M107.500 4.500h4" />
          <path d="M107.500 6.500h4l-2 2.200z" fill="#fff" stroke="none" />
        </svg>
      </div>
      <div className="pt-[2px] tracking-[-0.4px]">aula1.xlsx - Excel</div>
      <div className="flex flex-1 justify-end pr-[11px]">
        <svg className="h-[10px] w-[103px]" viewBox="0 0 103 10" fill="none" stroke="#fff">
          <path d="M1.500 1.500h8v7h-8zM1.500 3.500h8M5.500 8V5M4 6.500l1.500-1.500L7 6.500" strokeWidth=".9" />
          <path d="M33.500 5.500h6.500" />
          <path d="M64.500 3.500h4.500v4.500h-4.500zM66 3.500V2h4.500v4.500H69" />
          <path d="M95 2l6 6M101 2l-6 6" />
        </svg>
      </div>
    </div>
  );
}

const tabs = [
  { name: "Arquivo", width: "w-[39px]" },
  { name: "Página Inicial", width: "w-[69px]" },
  { name: "Inserir", width: "w-[39px]" },
  { name: "Layout da Página", width: "w-[81px]" },
  { name: "Fórmulas", width: "w-[51px]" },
  { name: "Dados", width: "w-[42px]" },
  { name: "Revisão", width: "w-[46px]" },
  { name: "Exibir", width: "w-[38px]" },
  { name: "Desenvolvedor", width: "w-[72px]" },
];

function TabBar() {
  return (
    <div className="flex h-[17px] items-stretch text-[8.5px] tracking-[-0.35px] text-white">
      {tabs.map((tab) => (
        <div
          key={tab.name}
          className={`${tab.width} mt-px flex items-center justify-center whitespace-nowrap ${
            tab.name === "Inserir" ? "bg-[#f1f1f1] font-semibold text-[#217346]" : ""
          }`}
        >
          {tab.name}
        </div>
      ))}
      <div className="ml-[9px] flex items-center gap-[4px] tracking-[-0.3px]">
        <svg className="h-[10px] w-[8px]" viewBox="0 0 8 10" fill="none" stroke="#fff" strokeWidth=".9">
          <path d="M2.500 7C2.500 5.500 1 5 1 3.300a3 3 0 0 1 6 0C7 5 5.500 5.500 5.500 7zM2.700 9h2.600" />
        </svg>
        O que você deseja fazer...
      </div>
      <div className="ml-auto flex items-center">
        <span className="mr-[7px]">Mário Fortunato</span>
        <div className="mr-[11px] flex h-[16px] w-[69px] items-center gap-[2px] bg-[#185c37] pl-[5px]">
          <svg className="h-[11px] w-[10px]" viewBox="0 0 10 11" fill="none" stroke="#fff">
            <circle cx="5" cy="3.500" r="2.800" />
            <path d="M.5 10Q1 6.500 4 6.300M6 8.500h4M8 6.500v4" />
          </svg>
          Compartilhar
        </div>
      </div>
    </div>
  );
}

function FormulaBar() {
  return (
    <div className="flex h-[58px] items-start bg-[#e6e6e6] pt-[8px] pr-[3px] pl-[3px]">
      <div className="mt-px flex h-[16px] w-[68px] items-center justify-between border border-[#d4d4d4] bg-white pr-[4px] pl-[4px] text-[8.5px] tracking-[-0.3px] text-[#444]">
        L8
        <Caret />
      </div>
      <div className="flex h-[17px] w-[20px] items-center justify-center">
        <svg className="h-[8px] w-[2px]" viewBox="0 0 2 8">
          <path d="M0 0h1.200v1.200H0zM0 3.300h1.200v1.200H0zM0 6.600h1.200v1.200H0z" fill="#aaa" />
        </svg>
      </div>
      <div className="mt-px flex h-[16px] w-[73px] items-center justify-between border border-[#d4d4d4] bg-white px-[8px]">
        <svg className="h-[7px] w-[7px]" viewBox="0 0 7 7" stroke="#b0b0b0">
          <path d="M.5.5l6 6M6.500.5l-6 6" />
        </svg>
        <svg className="h-[7px] w-[9px]" viewBox="0 0 9 7" fill="none" stroke="#b0b0b0" strokeWidth="1.300">
          <path d="M.8 3.500l2.500 2.500L8.300.8" />
        </svg>
        <span className="font-['Liberation_Serif'] text-[10px] font-bold text-[#555] italic">
          f<span className="text-[7px]">x</span>
        </span>
      </div>
      <div className="ml-[2px] flex h-[44px] flex-1 justify-end border border-[#d4d4d4] bg-white pt-[5px] pr-[3px]">
        <svg className="h-[4px] w-[6px]" viewBox="0 0 6 4" fill="none" stroke="#666" strokeWidth="1.200">
          <path d="M.8 3.200L3 1l2.200 2.200" />
        </svg>
      </div>
    </div>
  );
}

// C and D sit fully under the open shapes menu
const columns = [
  { name: "A", width: "w-[77px]" },
  { name: "B", width: "w-[82px]" },
  { name: "C", width: "w-[85px]", covered: true },
  { name: "D", width: "w-[86px]", covered: true },
  { name: "E", width: "w-[72px]" },
  { name: "F", width: "w-[61px]" },
  { name: "G", width: "w-[92px]" },
  { name: "H", width: "w-[90px]" },
  { name: "I", width: "w-[96px]" },
  { name: "J", width: "w-[100px]" },
  { name: "K", width: "w-[62px]" },
  { name: "L", width: "w-[62px]" },
  { name: "M", width: "w-[62px]" },
  { name: "N", width: "w-[62px]" },
  { name: "O", width: "w-[62px]" },
  { name: "P", width: "w-[62px]" },
];

const cells: Record<string, string> = {
  A2: "Produto",
  B2: "Quantidade",
  C2: "Valo",
  A3: "Produto 1",
  B3: "6",
  A4: "Produto 2",
  B4: "5",
  A5: "Produto 3",
  B5: "1",
  A6: "Produto 4",
  B6: "15",
  C7: "Tota",
  G2: "Valor Máximo",
  H2: "Valor Minimo",
  I2: "Média",
  J2: "Contar Números",
  G3: "58,5",
  H3: "10,5",
  I3: "33,475",
  J3: "5",
};

function Cell({ col, row, width }: { col: string; row: number; width: string }) {
  const value = cells[`${col}${row}`];
  const isProducts = "ABC".includes(col) && row >= 2 && row <= 6;
  const isStats = "GHIJ".includes(col) && (row === 2 || row === 3);
  const isTotal = col === "C" && row === 7;
  const isNumber = value !== undefined && /^[\d,]+$/.test(value);
  return (
    <div
      className={`${width} relative flex shrink-0 items-center px-[2px] pt-[2px] whitespace-nowrap ${
        isNumber ? "justify-end" : ""
      } ${row === 2 || row === 7 ? "font-bold tracking-[0.050px] text-black" : ""} ${
        isProducts ? "border-r border-b border-r-[#555] border-b-[#333] bg-[#d9e1f2]" : ""
      } ${isStats ? "border-r border-b border-[#333]" : ""} ${isTotal ? "border-b border-[#333]" : ""}`}
    >
      {isStats && row === 2 && <span className="absolute -top-px -right-px -left-px h-px bg-[#555]" />}
      {((isStats && col === "G") || isTotal) && <span className="absolute top-0 -bottom-px -left-px w-px bg-[#222]" />}
      {value}
      {row === 2 && (col === "A" || col === "B") && (
        <span className="absolute right-px bottom-px flex h-[11px] w-[11px] items-center justify-center border border-[#b5b5b5] bg-white">
          <Caret />
        </span>
      )}
      {col === "L" && row === 8 && (
        <span className="absolute -top-[2px] right-0 -bottom-px -left-[2px] border-[1.5px] border-[#217346]">
          <span className="absolute -right-[2px] -bottom-[2px] h-[4px] w-[4px] bg-[#217346]" />
        </span>
      )}
    </div>
  );
}

function Sheet() {
  const rows = Array.from({ length: 25 }, (_, i) => i + 1);
  return (
    <div className="flex h-[502px] bg-[#e6e6e6]">
      <div className="flex w-[1266px] flex-col overflow-hidden border-r border-[#ababab] font-['Lato','Open_Sans',sans-serif] text-[13px] text-[#222]">
        <div className="flex h-[20px] shrink-0 border-b border-[#b5b5b5] font-['Open_Sans',sans-serif] text-[12px]">
          <div className="flex w-[27px] shrink-0 items-end justify-end border-r border-[#c4c4c4] pr-[2px] pb-[2px]">
            <svg className="h-[13px] w-[13px]" viewBox="0 0 13 13">
              <path d="M13 0v13H0z" fill="#b3b3b3" />
            </svg>
          </div>
          {columns.map((col) => (
            <div
              key={col.name}
              className={`${col.width} flex shrink-0 items-center justify-center border-r border-[#c4c4c4] pt-px ${
                col.name === "L" ? "-mb-px border-b-2 border-b-[#217346] bg-[#d2d2d2] text-[#666]" : ""
              }`}
            >
              {!col.covered && col.name}
            </div>
          ))}
        </div>
        {rows.map((row) => (
          <div key={row} className="flex h-[19.4px] shrink-0 bg-white">
            <div
              className={`flex w-[27px] shrink-0 items-center justify-center border-b border-[#c4c4c4] pt-px font-['Open_Sans',sans-serif] text-[12px] ${
                row === 8 ? "border-r-2 border-r-[#217346] bg-[#d2d2d2] text-[#217346]" : "border-r border-r-[#b5b5b5] bg-[#e6e6e6]"
              }`}
            >
              {row}
            </div>
            {row === 1 ? (
              <div className="flex w-[330px] items-center border-b border-[#333] bg-[#9bc2e6] pt-px pl-[109px] text-[14px] font-bold text-black">
                Tabela de V
              </div>
            ) : (
              columns.map((col) => <Cell key={col.name} col={col.name} row={row} width={col.width} />)
            )}
          </div>
        ))}
      </div>
      <div className="ml-[2px] flex w-[10px] flex-col pt-[2px]">
        <div className="flex h-[9px] items-center justify-center border border-[#ababab] bg-white">
          <span className="h-0 w-0 border-x-2 border-b-2 border-x-transparent border-b-[#666]" />
        </div>
        <div className="mt-px h-[459px] border border-[#ababab] bg-white" />
        <div className="flex-1 bg-[#d6d6d6]" />
        <div className="flex h-[9px] items-center justify-center border border-[#c4c4c4] bg-white">
          <Caret />
        </div>
      </div>
    </div>
  );
}

function SheetTabs() {
  return (
    <div className="flex h-[18px] border-t border-[#b5b5b5] bg-[#e6e6e6] text-[8.5px] tracking-[-0.150px] text-[#555]">
      <div className="flex w-[67px] items-center gap-[14px] pl-[17px]">
        <span className="h-0 w-0 border-y-2 border-r-3 border-y-transparent border-r-[#c2c2c2]" />
        <span className="h-0 w-0 border-y-2 border-l-3 border-y-transparent border-l-[#c2c2c2]" />
      </div>
      <div className="flex h-[16px] w-[54px] items-center justify-center border-b border-[#217346] bg-white font-bold text-[#217346]">
        Planilha1
      </div>
      <div className="mt-px mb-[3px] flex w-[54px] items-center justify-center border-r border-[#c4c4c4]">Planilha2</div>
      <div className="mt-px mb-[3px] flex w-[54px] items-center justify-center border-r border-[#999]">Planilha3</div>
      <div className="ml-[21px] flex items-center pb-px">
        <svg className="h-[12px] w-[12px]" viewBox="0 0 12 12" fill="none" stroke="#777">
          <circle cx="6" cy="6" r="5.300" strokeWidth=".8" />
          <path d="M3 6h6M6 3v6" strokeWidth="1.500" />
        </svg>
      </div>
      <div className="mr-[14px] ml-auto flex items-center pb-px">
        <svg className="mr-[10px] h-[8px] w-[2px]" viewBox="0 0 2 8">
          <path d="M0 0h1.200v1.200H0zM0 3.300h1.200v1.200H0zM0 6.600h1.200v1.200H0z" fill="#aaa" />
        </svg>
        <div className="flex h-[10px] w-[487px] bg-[#dadada]">
          <div className="flex w-[11px] items-center justify-center border border-r-0 border-[#ababab] bg-white">
            <span className="h-0 w-0 border-y-2 border-r-3 border-y-transparent border-r-[#666]" />
          </div>
          <div className="w-[437px] border border-[#ababab] bg-white" />
          <div className="ml-auto flex w-[9px] items-center justify-center border border-[#ababab] bg-white">
            <span className="h-0 w-0 border-y-2 border-l-3 border-y-transparent border-l-[#666]" />
          </div>
        </div>
      </div>
    </div>
  );
}

function StatusBar() {
  return (
    <div className="flex h-[15px] items-center border-t border-[#c9c9c9] bg-[#f1f1f1] text-[8.5px] text-[#555]">
      <span className="w-[36px] pl-[4px] tracking-[-0.4px]">Pronto</span>
      <svg className="ml-[5px] h-[9px] w-[9px]" viewBox="0 0 9 9" fill="none" stroke="#777">
        <path d="M3.500 1.500h5v7h-7V4M3 4.500h5M3 6.500h5" />
        <circle cx="1.500" cy="1.500" r="1.500" fill="#666" stroke="none" />
      </svg>
      <div className="ml-auto flex h-full items-center">
        <div className="flex h-full w-[25px] items-center justify-center bg-[#c9c9c9]">
          <svg className="h-[9px] w-[9px]" viewBox="0 0 9 9" fill="none" stroke="#666">
            <path d="M.5.5h8v8h-8zM3.200.5v8M5.800.5v8M.5 3.200h8M.5 5.800h8" strokeWidth=".8" />
          </svg>
        </div>
        <svg className="ml-[8px] h-[9px] w-[10px]" viewBox="0 0 10 9" fill="none" stroke="#777">
          <path d="M.5.5h9v8h-9zM2.500 2h5v5h-5zM4 3.500h3M4 5.500h3" strokeWidth=".8" />
        </svg>
        <svg className="ml-[15px] h-[9px] w-[10px]" viewBox="0 0 10 9" fill="none" stroke="#777">
          <path d="M.5.5h9v8h-9zM3 .5V5H.5M6.500.5V5H3" strokeWidth=".8" />
        </svg>
        <svg className="ml-[11px] h-[9px] w-[82px]" viewBox="0 0 82 9" fill="none" stroke="#555">
          <path d="M0 4.500h4.500M76 4.500h5.500M78.800 2v5" strokeWidth="1.300" />
          <path d="M7 4.500h66" stroke="#aaa" />
          <path d="M44.700 1v7.500" strokeWidth="2.500" />
        </svg>
        <span className="mr-[6px] ml-[9px] w-[18px] tracking-[-0.6px]">145%</span>
      </div>
    </div>
  );
}

function ShapeIcon({ shape }: { shape: string | Shape }) {
  const s = typeof shape === "string" ? { d: shape } : shape;
  return (
    <div className={`flex h-[13.330px] w-[13.350px] items-center justify-center ${s.active ? "bg-[#c9c9c9]" : ""}`}>
      <svg className="h-[12px] w-[12px]" viewBox="0 0 12 12" fill="none" stroke="#666" strokeWidth=".75">
        <path d={s.d} />
        {s.t && (
          <text x="6" y="7.700" fontSize="4.500" textAnchor="middle" fill="#444" stroke="none">
            {s.t}
          </text>
        )}
      </svg>
    </div>
  );
}

function ShapesMenu() {
  return (
    <div className="absolute top-[100px] left-[207px] h-[395px] w-[174px] border border-[#c6c6c6] bg-white">
      {sections.map((section) => (
        <div key={section.title}>
          <div className="ml-px flex h-[14.670px] w-[160px] items-center bg-[#ebebeb] pl-[5px] text-[8.5px] font-semibold tracking-[-0.4px] whitespace-nowrap text-[#5c5c5c]">
            {section.title}
          </div>
          {section.rows.map((row, i) => (
            <div key={i} className="flex h-[13.330px]">
              {row.map((shape, j) => (
                <ShapeIcon key={j} shape={shape} />
              ))}
            </div>
          ))}
        </div>
      ))}
      <svg className="absolute right-[2px] bottom-[2px] h-[5px] w-[5px]" viewBox="0 0 5 5" fill="#999">
        <path d="M3.500 0h1v1h-1zM3.500 3.500h1v1h-1zM0 3.500h1v1H0z" />
      </svg>
      <svg className="absolute top-[287px] left-[108px] h-[16px] w-[10px]" viewBox="0 0 10 16">
        <path d="M.7.8v11.500l2.600-2.500 1.900 4.700 1.900-.8-1.900-4.500h3.600z" fill="#fff" stroke="#111" strokeWidth=".9" />
      </svg>
    </div>
  );
}

// Circuit-like decoration behind the right part of the title bar
function Decoration() {
  return (
    <svg className="absolute top-0 right-0 h-[39px] w-[330px]" viewBox="0 0 330 39" fill="none" stroke="#1e693f" strokeWidth="2.500">
      <circle cx="183" cy="12" r="17" strokeWidth="4" />
      <path d="M176 19l13-13M179 5h11v11" strokeWidth="4" />
      <circle cx="15" cy="25" r="12" />
      <path d="M10 30l9-9M12 20h8v8" />
      <path d="M0 10h120q10 0 18 8l8 6h20M45 22h40q10 0 16 5l10 8h40M75 34q5-6 14-6h12M330 18h-75l-12 12h-20M330 4h-20l-18 18M330 28h-24" />
      <circle cx="45" cy="22" r="2" fill="#1e693f" />
      <circle cx="120" cy="10" r="2" fill="#1e693f" />
    </svg>
  );
}

export default function App() {
  return (
    <div className="relative h-[720px] w-[1280px] overflow-hidden bg-black pt-[13px] font-['Open_Sans',sans-serif]">
      <div className="relative h-[39px] bg-[#217346]">
        <Decoration />
        <div className="relative">
          <TitleBar />
          <TabBar />
        </div>
      </div>
      <Ribbon />
      <FormulaBar />
      <Sheet />
      <SheetTabs />
      <StatusBar />
      <ShapesMenu />
    </div>
  );
}
